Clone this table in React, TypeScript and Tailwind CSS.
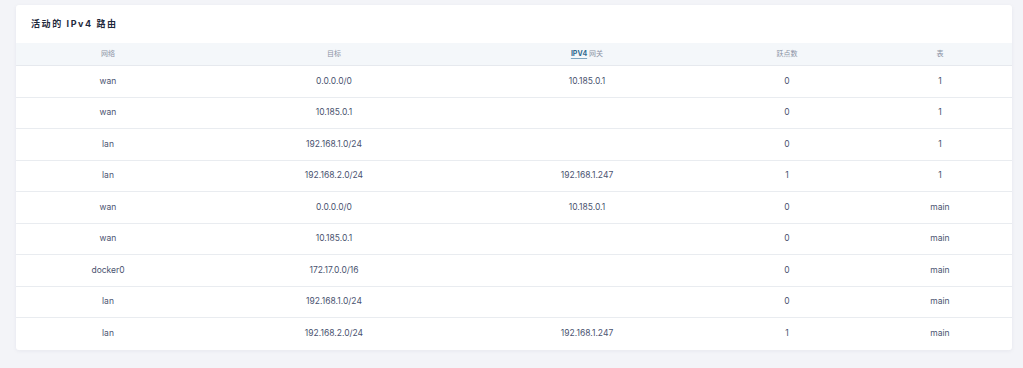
const rows = [
  { iface: "wan", target: "0.0.0.0/0", gw: "10.185.0.1", metric: "0", table: "1" },
  { iface: "wan", target: "10.185.0.1", gw: "", metric: "0", table: "1" },
  { iface: "lan", target: "192.168.1.0/24", gw: "", metric: "0", table: "1" },
  { iface: "lan", target: "192.168.2.0/24", gw: "192.168.1.247", metric: "1", table: "1" },
  { iface: "wan", target: "0.0.0.0/0", gw: "10.185.0.1", metric: "0", table: "main" },
  { iface: "wan", target: "10.185.0.1", gw: "", metric: "0", table: "main" },
  { iface: "docker0", target: "172.17.0.0/16", gw: "", metric: "0", table: "main" },
  { iface: "lan", target: "192.168.1.0/24", gw: "", metric: "0", table: "main" },
  { iface: "lan", target: "192.168.2.0/24", gw: "192.168.1.247", metric: "1", table: "main" },
];

const cols = "grid grid-cols-[184px_268px_238px_162px_144px]";

export default function App() {
  return (
    <div
      className="w-[1023px] h-[368px] bg-[#f3f4f8] pt-[5px] pl-4 overflow-hidden"
      style={{ fontFamily: 'Inter, "Noto Sans CJK SC", sans-serif' }}
    >
      <div className="w-[996px] bg-white rounded-[3px] shadow-[0_1px_4px_rgba(30,40,80,0.06)] overflow-hidden">
        {/* 标题 */}
        <div className="h-[38px] flex items-center px-[15px]">
          <h3 className="text-[9px] font-bold tracking-[1.6px] text-[#1f2a3c]">活动的 IPv4 路由</h3>
        </div>

        {/* 表头 */}
        <div className={`${cols} h-[23px] items-center bg-[#f4f7fa] border-b border-[#e6e9ee] text-[7px] text-[#8b93a5] text-center`}>
          <span>网络</span>
          <span>目标</span>
          <span>
            <span className="font-bold text-[#2f6a8f] underline decoration-[#7fa6c0] underline-offset-2">IPV4</span> 网关
          </span>
          <span>跃点数</span>
          <span>表</span>
        </div>

        {/* 路由列表 */}
        <div className="divide-y divide-[#e9ecf0]">
          {rows.map((r, i) => (
            <div key={i} className={`${cols} h-[31.5px] items-center text-[8.5px] text-[#4a5370] text-center`}>
              <span>{r.iface}</span>
              <span>{r.target}</span>
              <span>{r.gw}</span>
              <span>{r.metric}</span>
              <span>{r.table}</span>
            </div>
          ))}
        </div>
      </div>
    </div>
  );
}
